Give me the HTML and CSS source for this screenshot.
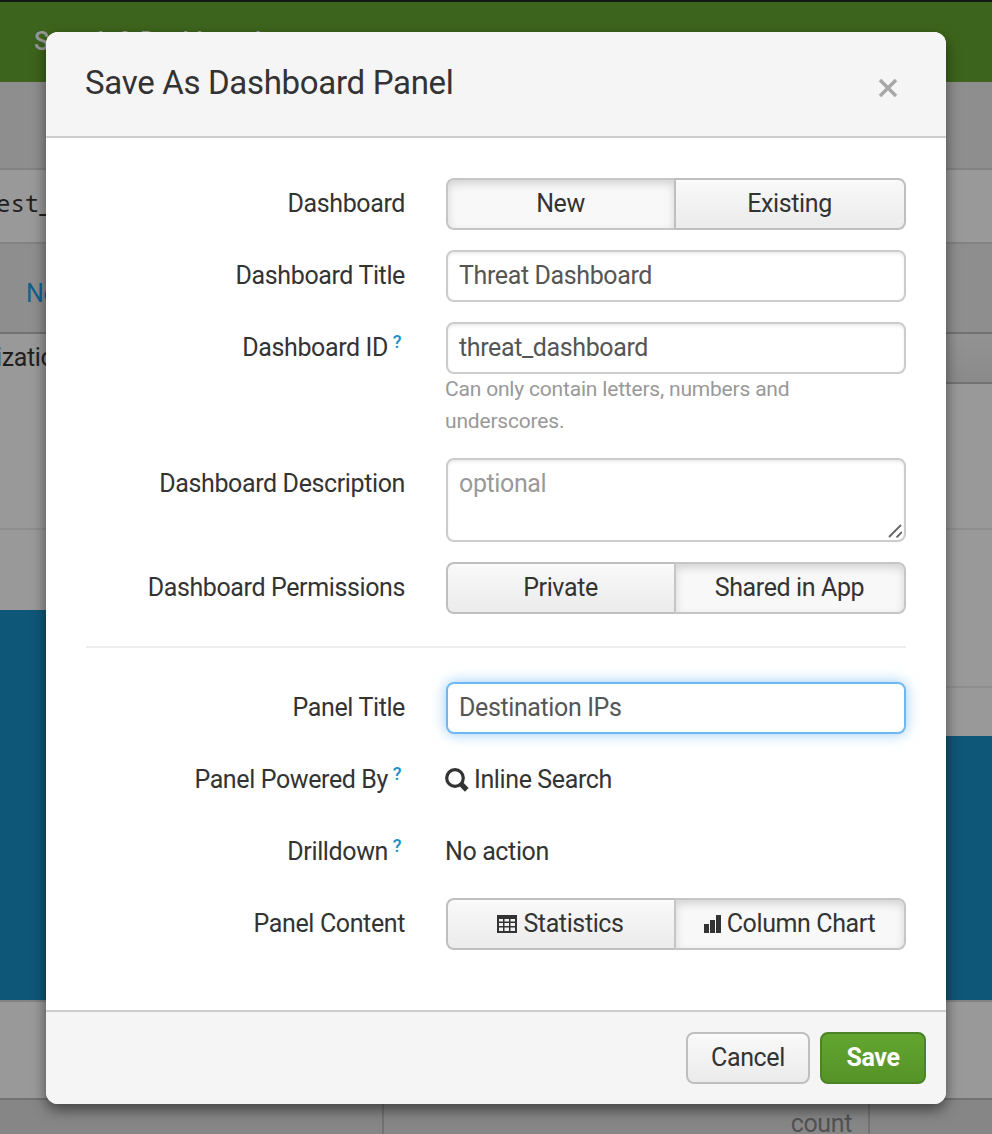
FILE: index.html
```html
<!DOCTYPE html>
<html lang="en">
<head>
<meta charset="utf-8">
<title>Save As Dashboard Panel</title>
<link rel="stylesheet" href="styles.css">
</head>
<body>
<div class="page">
  <div class="topbar"></div>
  <div class="appbar">Search &amp; Dashboard</div>
  <div class="spacer"></div>
  <div class="query"><span>est_</span></div>
  <div class="options">No</div>
  <div class="tabs"><div class="tab"><span>ization</span></div><div class="tab-rest"></div></div>
  <div class="chart"><div class="bar bar-tall"></div><div class="bar bar-short"></div></div>
  <div class="axis"></div>
  <div class="table-head"><div class="cell cell-a"></div><div class="cell cell-b">count</div><div class="cell"></div></div>
</div>

<div class="modal">
  <div class="modal-header">
    <h1 class="title">Save As Dashboard Panel</h1>
    <svg class="close" viewBox="0 0 20 20"><path d="M2 2L18 18M18 2L2 18"/></svg>
  </div>
  <div class="modal-body">
    <div class="row">
      <div class="label">Dashboard</div>
      <div class="toggle"><div class="btn active">New</div><div class="btn">Existing</div></div>
    </div>
    <div class="row">
      <div class="label">Dashboard Title</div>
      <div class="input">Threat Dashboard</div>
    </div>
    <div class="row">
      <div class="label">Dashboard ID<span class="tip">?</span></div>
      <div><div class="input">threat_dashboard</div><div class="help">Can only contain letters, numbers and underscores.</div></div>
    </div>
    <div class="row">
      <div class="label">Dashboard Description</div>
      <div class="input area"><span>optional</span><svg class="grip" viewBox="0 0 14 14"><path d="M1 13L13 1M8.5 13.5L14 8"/></svg></div>
    </div>
    <div class="row">
      <div class="label">Dashboard Permissions</div>
      <div class="toggle"><div class="btn">Private</div><div class="btn active">Shared in App</div></div>
    </div>
    <div class="divider"></div>
    <div class="row">
      <div class="label">Panel Title</div>
      <div class="input focused">Destination IPs</div>
    </div>
    <div class="row">
      <div class="label">Panel Powered By<span class="tip">?</span></div>
      <div class="value"><svg class="search" viewBox="0 0 24 24"><circle cx="10" cy="10" r="8.3"/><path d="M16.2 16.2L21.8 21.8"/></svg>Inline Search</div>
    </div>
    <div class="row">
      <div class="label">Drilldown<span class="tip">?</span></div>
      <div class="value">No action</div>
    </div>
    <div class="row">
      <div class="label">Panel Content</div>
      <div class="toggle">
        <div class="btn"><svg class="table-icon" viewBox="0 0 20 18"><path fill-rule="evenodd" d="M0 0H20V18H0ZM2 4V6.5H6V4ZM7.5 4V6.5H12V4ZM13.5 4V6.5H18V4ZM2 8V11H6V8ZM7.5 8V11H12V8ZM13.5 8V11H18V8ZM2 12.5V16H6V12.5ZM7.5 12.5V16H12V12.5ZM13.5 12.5V16H18V12.5Z"/></svg>Statistics</div>
        <div class="btn active"><svg class="chart-icon" viewBox="0 0 17 18"><path d="M0 9H5V18H0ZM6 5H11V18H6ZM12 0H17V18H12Z"/></svg>Column Chart</div>
      </div>
    </div>
  </div>
  <div class="modal-footer">
    <div class="btn cancel">Cancel</div>
    <div class="btn save">Save</div>
  </div>
</div>
</body>
</html>
```

FILE: styles.css
```css
* { box-sizing: border-box; }
body {
  margin: 0;
  width: 992px;
  height: 1134px;
  overflow: hidden;
  position: relative;
  font-family: Roboto, "Liberation Sans", sans-serif;
  font-size: 25px;
  letter-spacing: -.38px;
  line-height: 48px;
  color: #333;
}

/* Dimmed page behind the dialog */
.page { display: flex; flex-direction: column; height: 1134px; background: #999; color: #1f1f1f; white-space: nowrap; }
.topbar { height: 2px; background: #161616; }
.appbar { height: 80px; padding: 16px 0 0 34px; background: #3d641c; color: #999; font-weight: 500; letter-spacing: 0; }
.spacer { height: 88px; background: #8e8e8e; border-bottom: 2px solid #828282; }
.query { height: 74px; padding-top: 9px; border-bottom: 2px solid #828282; font-family: "Noto Sans Mono", "DejaVu Sans Mono", monospace; font-size: 24px; letter-spacing: 0; }
.query span { display: block; margin-left: -4px; }
.options { height: 90px; padding: 26px 0 0 26px; background: #8e8e8e; border-bottom: 2px solid #727272; color: #10618a; }
.tabs { display: flex; height: 50px; }
.tab { width: 200px; }
.tab span { display: block; margin-left: -4px; }
.tab-rest { flex: 1; background: linear-gradient(#939393, #8a8a8a); border-bottom: 2px solid #727272; }
.chart {
  display: flex;
  align-items: flex-end;
  justify-content: space-between;
  height: 616px;
  background:
    linear-gradient(#8e8e8e, #8e8e8e) 0 144px / 100% 2px no-repeat,
    linear-gradient(#8e8e8e, #8e8e8e) 0 302px / 100% 2px no-repeat;
}
.bar { width: 240px; background: #0f5778; }
.bar-tall { height: 390px; }
.bar-short { height: 264px; }
.axis { height: 100px; border-top: 2px solid #828282; border-bottom: 2px solid #727272; }
.table-head { display: flex; height: 34px; background: #868686; color: #525252; }
.cell { height: 34px; }
.cell-a { width: 384px; border-right: 2px solid #727272; }
.cell-b { width: 486px; padding-right: 16px; border-right: 2px solid #727272; text-align: right; }

/* Dialog */
.modal {
  position: absolute;
  left: 46px;
  top: 32px;
  width: 900px;
  height: 1072px;
  display: flex;
  flex-direction: column;
  border-radius: 12px;
  background: #fff;
  box-shadow: 0 6px 14px rgba(0, 0, 0, .5);
  overflow: hidden;
}
.modal-header { display: flex; justify-content: space-between; height: 106px; padding: 26px 48px 0 39px; background: #f5f5f5; border-bottom: 2px solid #ccc; }
.title { margin: 0; font-size: 33px; letter-spacing: -.31px; line-height: 49px; font-weight: 400; }
.close { width: 20px; height: 20px; margin-top: 20px; fill: none; stroke: #a7a7a7; stroke-width: 3.4; }
.modal-body { flex: 1; display: flex; flex-direction: column; gap: 20px; padding: 40px; }
.row { display: grid; grid-template-columns: 319px 460px; column-gap: 41px; }
.label { height: 52px; line-height: 51px; text-align: right; white-space: nowrap; }
.tip { display: inline-block; width: 9px; margin: 0 4px; font-size: 18px; font-weight: 500; line-height: 20px; color: #1a8fcb; transform: translateY(-8px); }
.value { display: flex; align-items: center; height: 52px; margin-left: -1px; }
.input { height: 52px; padding: 0 11px; border: 2px solid #ccc; border-radius: 8px; color: #555; line-height: 47px; box-shadow: inset 0 2px 3px rgba(0, 0, 0, .08); }
.area { display: flex; justify-content: space-between; align-items: flex-end; height: 84px; padding-right: 2px; padding-bottom: 2px; color: #999; }
.area span { align-self: flex-start; }
.grip { width: 14px; height: 14px; fill: none; stroke: #666; stroke-width: 1.8; }
.focused { border-color: #6fb7f3; box-shadow: 0 0 14px rgba(82, 168, 236, .6); }
.help { width: 400px; margin: -1px 0 1px -1px; font-size: 21px; letter-spacing: -.19px; line-height: 32px; color: #999; }
.toggle { display: grid; grid-template-columns: 228px 232px; height: 52px; }
.btn {
  display: flex;
  align-items: center;
  justify-content: center;
  height: 52px;
  padding-bottom: 1px;
  border: 2px solid #bfbfbf;
  border-radius: 8px;
  background: linear-gradient(#f9f9f9, #ebebeb);
  box-shadow: inset 0 2px 0 rgba(255, 255, 255, .4);
}
.toggle .btn:first-child { padding-right: 1px; border-right: 0; border-radius: 8px 0 0 8px; }
.toggle .btn:last-child { padding-right: 1px; border-radius: 0 8px 8px 0; }
.active { border-color: #c6c6c6; background: #f8f8f8; box-shadow: inset 0 4px 8px rgba(0, 0, 0, .15); }
.divider { height: 2px; margin: 12px 0 14px; background: #eee; }
.search { width: 24px; height: 24px; margin-right: 5px; fill: none; stroke: #333; stroke-width: 3.2; }
.search path { stroke-width: 5.2; }
.table-icon { width: 20px; height: 18px; margin-right: 6px; fill: #333; }
.chart-icon { width: 17px; height: 18px; margin-right: 6px; fill: #333; }
.modal-footer { display: flex; justify-content: flex-end; gap: 10px; height: 94px; padding: 20px 20px 0; background: #f5f5f5; border-top: 2px solid #ccc; }
.cancel { width: 124px; }
.save { width: 106px; border-color: #4a8427; background: linear-gradient(#62a62f, #569228); box-shadow: none; color: #fff; font-weight: 700; }
```
